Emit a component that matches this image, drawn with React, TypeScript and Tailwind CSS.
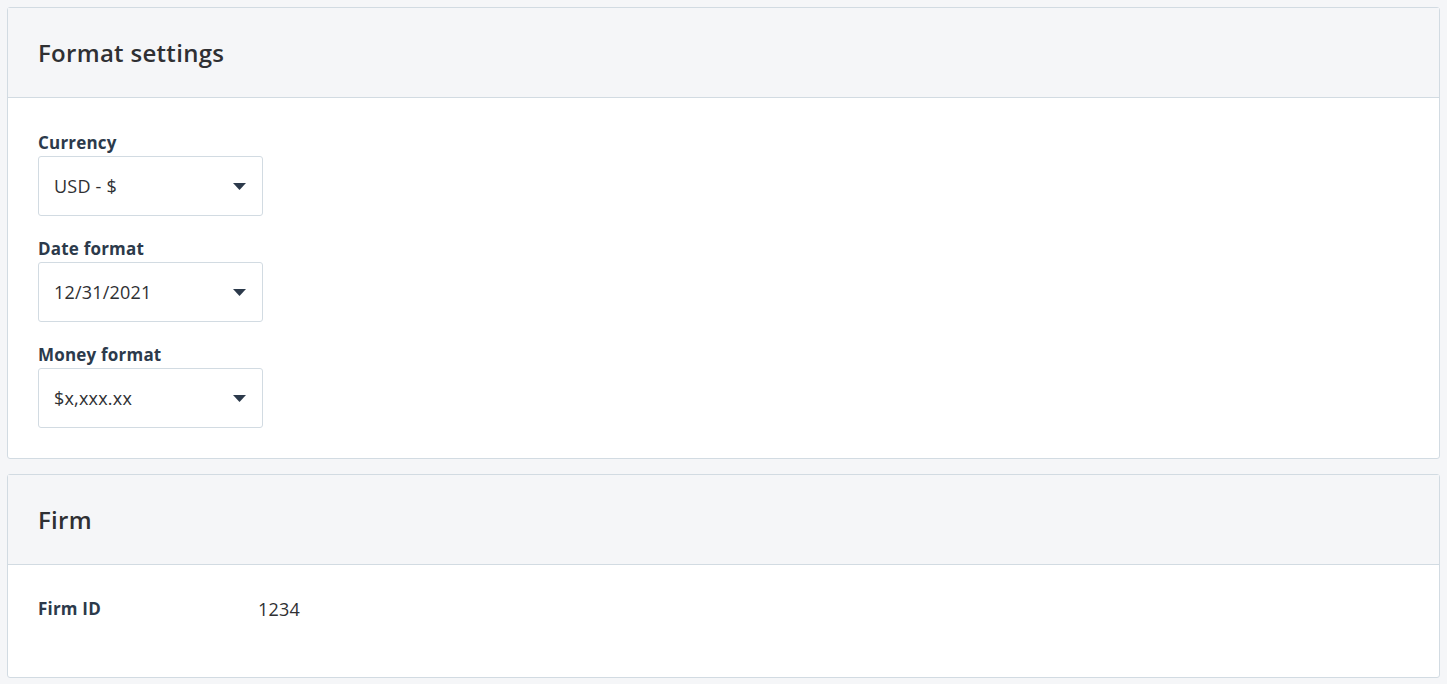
import { ReactNode } from "react";

const font = { fontFamily: "'Open Sans', Lato, sans-serif" };

function Caret() {
  return (
    <svg width="13" height="7" viewBox="0 0 13 7" className="shrink-0">
      <path d="M0 0 L13 0 L6.5 7 Z" fill="#2c3a4b" />
    </svg>
  );
}

function Panel({ title, children }: { title: string; children: ReactNode }) {
  return (
    <section className="rounded-[3px] border border-[#d2dbe2] bg-white">
      <header className="flex h-[90px] items-center border-b border-[#d2dbe2] bg-[#f5f6f8] px-[30px]">
        <h2 className="text-[24px] font-semibold tracking-[0.3px] text-[#2f3033]">
          {title}
        </h2>
      </header>
      {children}
    </section>
  );
}

function SelectField({ label, value }: { label: string; value: string }) {
  return (
    <div className="flex flex-col gap-[3px]">
      <label className="text-[17px] leading-[20px] font-bold tracking-[0.2px] text-[#2c3a4b]">
        {label}
      </label>
      <div className="flex h-[60px] w-[225px] items-center justify-between rounded-[3px] border border-[#d2dbe2] bg-white pr-[16px] pl-[15px]">
        <span className="text-[18px] tracking-[0.2px] text-[#2f3033]">{value}</span>
        <Caret />
      </div>
    </div>
  );
}

export default function App() {
  return (
    <div
      className="flex min-h-[684px] flex-col gap-[15px] bg-[#f5f6f8] px-[7px] pt-[7px]"
      style={font}
    >
      <Panel title="Format settings">
        <div className="flex flex-col gap-[23px] px-[30px] pt-[35px] pb-[30px]">
          <SelectField label="Currency" value="USD - $" />
          <SelectField label="Date format" value="12/31/2021" />
          <SelectField label="Money format" value="$x,xxx.xx" />
        </div>
      </Panel>
      <Panel title="Firm">
        <div className="flex items-center px-[30px] pt-[32px] pb-[56px]">
          <span className="w-[220px] text-[17px] leading-[24px] font-bold tracking-[0.2px] text-[#2c3a4b]">
            Firm ID
          </span>
          <span className="text-[18px] leading-[24px] tracking-[0.2px] text-[#2f3033]">
            1234
          </span>
        </div>
      </Panel>
    </div>
  );
}
